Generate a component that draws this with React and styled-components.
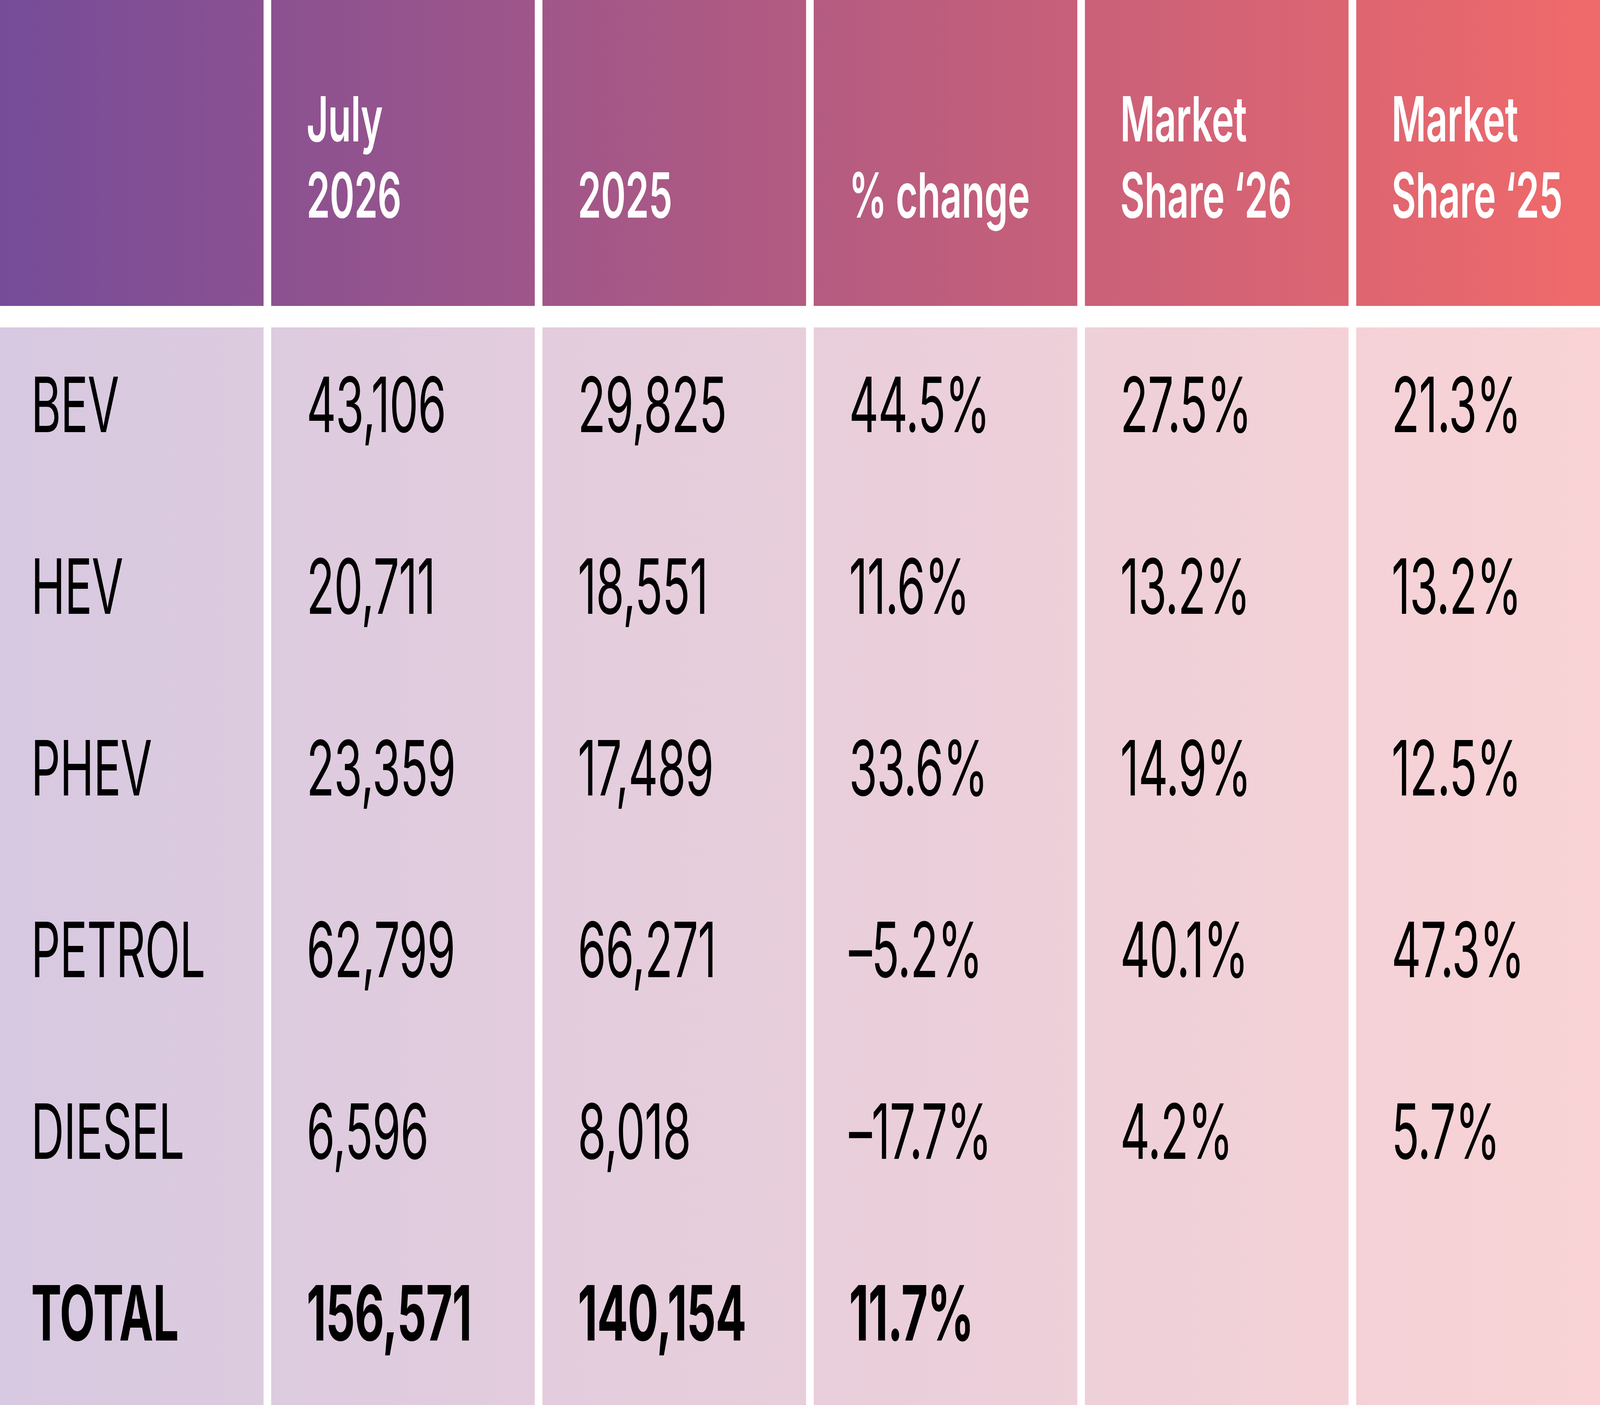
import React, { useEffect, useState } from 'react'
import styled, { createGlobalStyle, css } from 'styled-components'

// design size of the artwork; the page is scaled to whatever window it gets
const DESIGN_W = 6807
const DESIGN_H = 3596
const COL_W = 1121
const COL_GAP = 33

const GlobalStyle = createGlobalStyle`
  html, body {
    margin: 0;
    padding: 0;
    background: #ffffff;
    overflow: hidden;
  }
  body {
    font-family: Inter, "Liberation Sans", sans-serif;
  }
`

const stripe = (from, to) => css`
  background-color: ${to};
  background-image: linear-gradient(90deg, ${from} 0px, ${to} ${DESIGN_W}px);
  background-size: ${DESIGN_W}px 100%;
  background-repeat: no-repeat;
  background-position: ${(p) => -p.col * (COL_W + COL_GAP)}px 0;
`

const Page = styled.div`
  width: ${DESIGN_W}px;
  height: ${DESIGN_H}px;
  overflow: hidden;
  background: #ffffff;
  transform-origin: 0 0;
`

const Table = styled.div`
  width: ${6 * COL_W + 5 * COL_GAP}px;
  display: flex;
  flex-direction: column;
  gap: 55px;
`

const Row = styled.div`
  display: grid;
  grid-template-columns: repeat(6, ${COL_W}px);
  column-gap: ${COL_GAP}px;
`

const HeadCell = styled.div`
  height: 783px;
  box-sizing: border-box;
  display: flex;
  flex-direction: column;
  justify-content: flex-end;
  padding: 0 0 186px ${(p) => (p.col === 0 ? 132 : 150)}px;
  ${stripe('#764c99', '#f06a6a')}
  color: #ffffff;
  font-size: 160px;
  font-weight: 600;
  line-height: 195px;
  letter-spacing: -1px;
  white-space: nowrap;
`

const Body = styled.div`
  display: flex;
  flex-direction: column;
`

const Cell = styled.div`
  height: 465px;
  box-sizing: border-box;
  padding: 100px 0 0 ${(p) => (p.col === 0 ? 132 : 150)}px;
  ${stripe('#d7c9e1', '#f9d3d5')}
  color: #000000;
  font-size: 195px;
  font-weight: 400;
  line-height: 1;
  letter-spacing: -2px;
  white-space: nowrap;
  ${(p) =>
    p.total &&
    css`
      font-weight: 700;
    `}
`

const headers = [[], ['July', '2026'], ['2025'], ['% change'], ['Market', 'Share ‘26'], ['Market', 'Share ‘25']]

const rows = [
  ['BEV', '43,106', '29,825', '44.5%', '27.5%', '21.3%'],
  ['HEV', '20,711', '18,551', '11.6%', '13.2%', '13.2%'],
  ['PHEV', '23,359', '17,489', '33.6%', '14.9%', '12.5%'],
  ['PETROL', '62,799', '66,271', '–5.2%', '40.1%', '47.3%'],
  ['DIESEL', '6,596', '8,018', '–17.7%', '4.2%', '5.7%'],
  ['TOTAL', '156,571', '140,154', '11.7%', '', ''],
]

function useFit() {
  const get = () => ({
    x: window.innerWidth / DESIGN_W,
    y: window.innerHeight / DESIGN_H,
  })
  const [fit, setFit] = useState(get)
  useEffect(() => {
    const onResize = () => setFit(get())
    window.addEventListener('resize', onResize)
    return () => window.removeEventListener('resize', onResize)
  }, [])
  return fit
}

export default function App() {
  const fit = useFit()
  return (
    <Page style={{ transform: `scale(${fit.x}, ${fit.y})` }}>
      <GlobalStyle />
      <Table>
        <Row>
          {headers.map((lines, i) => (
            <HeadCell key={i} col={i}>
              {lines.map((line, j) => (
                <span key={j}>{line}</span>
              ))}
            </HeadCell>
          ))}
        </Row>
        <Body>
          {rows.map((r, ri) => (
            <Row key={ri}>
              {r.map((v, ci) => (
                <Cell key={ci} col={ci} total={ri === rows.length - 1}>
                  {v}
                </Cell>
              ))}
            </Row>
          ))}
        </Body>
      </Table>
    </Page>
  )
}
